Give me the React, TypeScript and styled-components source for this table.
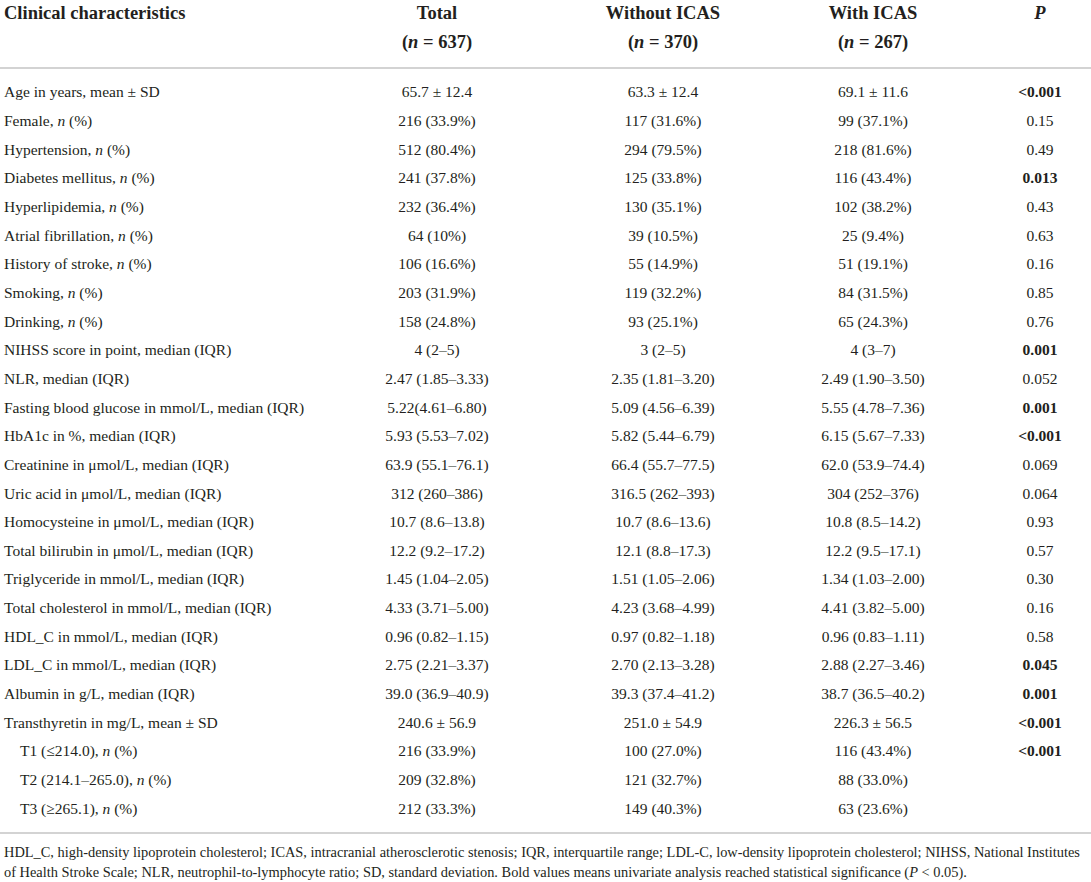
import styled, { createGlobalStyle } from "styled-components";

type RowData = {
  label: string;
  nPct?: boolean;
  indent?: boolean;
  total: string;
  without: string;
  withIcas: string;
  p: string;
  sig?: boolean;
};

const rows: RowData[] = [
  { label: "Age in years, mean ± SD", total: "65.7 ± 12.4", without: "63.3 ± 12.4", withIcas: "69.1 ± 11.6", p: "<0.001", sig: true },
  { label: "Female", nPct: true, total: "216 (33.9%)", without: "117 (31.6%)", withIcas: "99 (37.1%)", p: "0.15" },
  { label: "Hypertension", nPct: true, total: "512 (80.4%)", without: "294 (79.5%)", withIcas: "218 (81.6%)", p: "0.49" },
  { label: "Diabetes mellitus", nPct: true, total: "241 (37.8%)", without: "125 (33.8%)", withIcas: "116 (43.4%)", p: "0.013", sig: true },
  { label: "Hyperlipidemia", nPct: true, total: "232 (36.4%)", without: "130 (35.1%)", withIcas: "102 (38.2%)", p: "0.43" },
  { label: "Atrial fibrillation", nPct: true, total: "64 (10%)", without: "39 (10.5%)", withIcas: "25 (9.4%)", p: "0.63" },
  { label: "History of stroke", nPct: true, total: "106 (16.6%)", without: "55 (14.9%)", withIcas: "51 (19.1%)", p: "0.16" },
  { label: "Smoking", nPct: true, total: "203 (31.9%)", without: "119 (32.2%)", withIcas: "84 (31.5%)", p: "0.85" },
  { label: "Drinking", nPct: true, total: "158 (24.8%)", without: "93 (25.1%)", withIcas: "65 (24.3%)", p: "0.76" },
  { label: "NIHSS score in point, median (IQR)", total: "4 (2–5)", without: "3 (2–5)", withIcas: "4 (3–7)", p: "0.001", sig: true },
  { label: "NLR, median (IQR)", total: "2.47 (1.85–3.33)", without: "2.35 (1.81–3.20)", withIcas: "2.49 (1.90–3.50)", p: "0.052" },
  { label: "Fasting blood glucose in mmol/L, median (IQR)", total: "5.22(4.61–6.80)", without: "5.09 (4.56–6.39)", withIcas: "5.55 (4.78–7.36)", p: "0.001", sig: true },
  { label: "HbA1c in %, median (IQR)", total: "5.93 (5.53–7.02)", without: "5.82 (5.44–6.79)", withIcas: "6.15 (5.67–7.33)", p: "<0.001", sig: true },
  { label: "Creatinine in μmol/L, median (IQR)", total: "63.9 (55.1–76.1)", without: "66.4 (55.7–77.5)", withIcas: "62.0 (53.9–74.4)", p: "0.069" },
  { label: "Uric acid in μmol/L, median (IQR)", total: "312 (260–386)", without: "316.5 (262–393)", withIcas: "304 (252–376)", p: "0.064" },
  { label: "Homocysteine in μmol/L, median (IQR)", total: "10.7 (8.6–13.8)", without: "10.7 (8.6–13.6)", withIcas: "10.8 (8.5–14.2)", p: "0.93" },
  { label: "Total bilirubin in μmol/L, median (IQR)", total: "12.2 (9.2–17.2)", without: "12.1 (8.8–17.3)", withIcas: "12.2 (9.5–17.1)", p: "0.57" },
  { label: "Triglyceride in mmol/L, median (IQR)", total: "1.45 (1.04–2.05)", without: "1.51 (1.05–2.06)", withIcas: "1.34 (1.03–2.00)", p: "0.30" },
  { label: "Total cholesterol in mmol/L, median (IQR)", total: "4.33 (3.71–5.00)", without: "4.23 (3.68–4.99)", withIcas: "4.41 (3.82–5.00)", p: "0.16" },
  { label: "HDL_C in mmol/L, median (IQR)", total: "0.96 (0.82–1.15)", without: "0.97 (0.82–1.18)", withIcas: "0.96 (0.83–1.11)", p: "0.58" },
  { label: "LDL_C in mmol/L, median (IQR)", total: "2.75 (2.21–3.37)", without: "2.70 (2.13–3.28)", withIcas: "2.88 (2.27–3.46)", p: "0.045", sig: true },
  { label: "Albumin in g/L, median (IQR)", total: "39.0 (36.9–40.9)", without: "39.3 (37.4–41.2)", withIcas: "38.7 (36.5–40.2)", p: "0.001", sig: true },
  { label: "Transthyretin in mg/L, mean ± SD", total: "240.6 ± 56.9", without: "251.0 ± 54.9", withIcas: "226.3 ± 56.5", p: "<0.001", sig: true },
  { label: "T1 (≤214.0)", nPct: true, indent: true, total: "216 (33.9%)", without: "100 (27.0%)", withIcas: "116 (43.4%)", p: "<0.001", sig: true },
  { label: "T2 (214.1–265.0)", nPct: true, indent: true, total: "209 (32.8%)", without: "121 (32.7%)", withIcas: "88 (33.0%)", p: "" },
  { label: "T3 (≥265.1)", nPct: true, indent: true, total: "212 (33.3%)", without: "149 (40.3%)", withIcas: "63 (23.6%)", p: "" },
];

const GlobalStyle = createGlobalStyle`
  body {
    margin: 0;
    background: #ffffff;
    color: #231f20;
    font-family: "Liberation Serif", "Times New Roman", serif;
  }
`;

const Page = styled.div`
  width: 1091px;
  overflow: hidden;
`;

const Grid = styled.div`
  display: grid;
  grid-template-columns: 305px 264px 188px 232px 1fr;
`;

const HeadRow = styled(Grid)`
  margin-top: -1px;
  padding-bottom: 10px;
  border-bottom: 2px solid #d3d3d3;
`;

const HeadCell = styled.div<{ $left?: boolean }>`
  font-size: 18.5px;
  font-weight: bold;
  line-height: 29px;
  text-align: ${(p) => (p.$left ? "left" : "center")};
  padding-left: ${(p) => (p.$left ? "4px" : "0")};
`;

const Body = styled.div`
  padding: 9px 0 9px;
`;

const Row = styled(Grid)`
  height: 28.66px;
  align-items: center;
  font-size: 15.5px;
`;

const Label = styled.div<{ $indent?: boolean }>`
  padding-left: ${(p) => (p.$indent ? "20px" : "4px")};
  white-space: nowrap;
`;

const Value = styled.div<{ $bold?: boolean }>`
  text-align: center;
  white-space: nowrap;
  font-weight: ${(p) => (p.$bold ? "bold" : "normal")};
`;

const Footnote = styled.div`
  border-top: 2px solid #d3d3d3;
  padding: 8px 0 0 4px;
  font-size: 14.4px;
  line-height: 20px;
`;

const FootLine = styled.div`
  white-space: nowrap;
`;

const App = () => {
  return (
    <Page>
      <GlobalStyle />
      <HeadRow>
        <HeadCell $left>Clinical characteristics</HeadCell>
        <HeadCell>
          Total
          <br />(<i>n</i> = 637)
        </HeadCell>
        <HeadCell>
          Without ICAS
          <br />(<i>n</i> = 370)
        </HeadCell>
        <HeadCell>
          With ICAS
          <br />(<i>n</i> = 267)
        </HeadCell>
        <HeadCell>
          <i>P</i>
        </HeadCell>
      </HeadRow>
      <Body>
        {rows.map((r) => (
          <Row key={r.label}>
            <Label $indent={r.indent}>
              {r.label}
              {r.nPct && (
                <>
                  , <i>n</i> (%)
                </>
              )}
            </Label>
            <Value>{r.total}</Value>
            <Value>{r.without}</Value>
            <Value>{r.withIcas}</Value>
            <Value $bold={r.sig}>{r.p}</Value>
          </Row>
        ))}
      </Body>
      <Footnote>
        <FootLine>
          HDL_C, high-density lipoprotein cholesterol; ICAS, intracranial atherosclerotic stenosis; IQR, interquartile
          range; LDL-C, low-density lipoprotein cholesterol; NIHSS, National Institutes
        </FootLine>
        <FootLine>
          of Health Stroke Scale; NLR, neutrophil-to-lymphocyte ratio; SD, standard deviation. Bold values means
          univariate analysis reached statistical significance (<i>P</i> &lt; 0.05).
        </FootLine>
      </Footnote>
    </Page>
  );
};

export default App;
